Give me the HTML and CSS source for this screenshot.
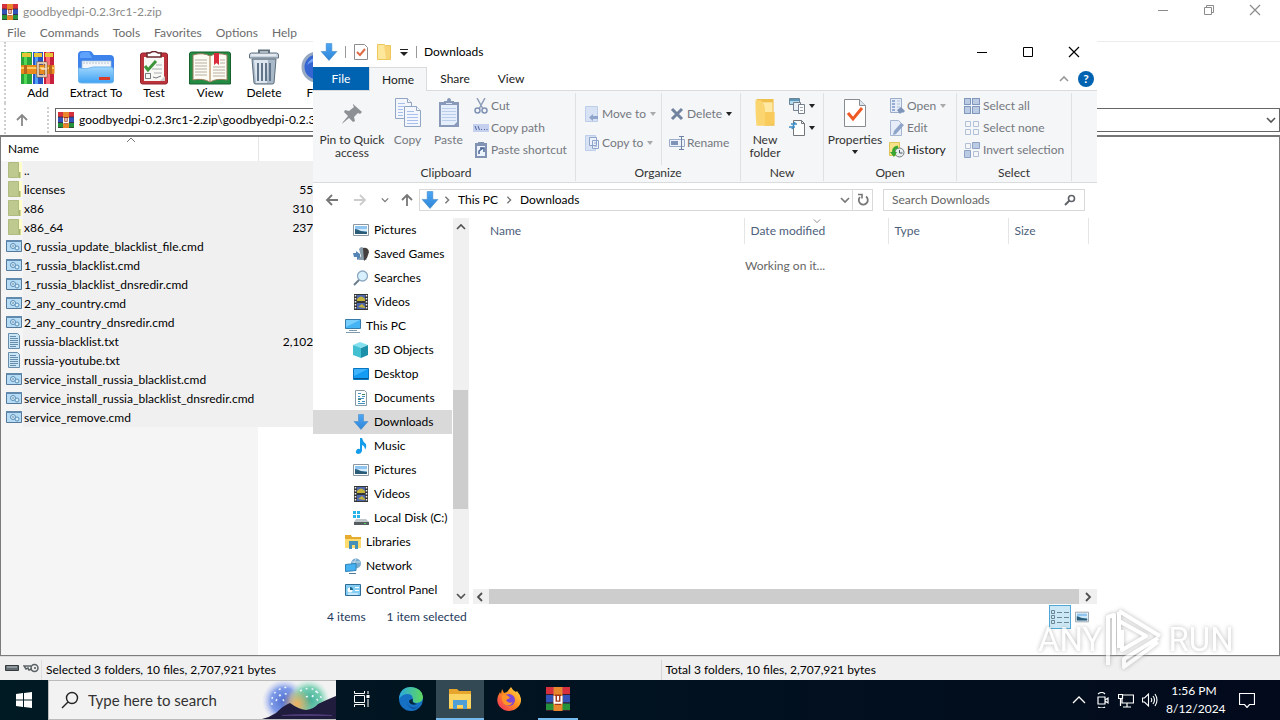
FILE: index.html
```html
<!DOCTYPE html>
<html lang="en">
<head>
<meta charset="utf-8">
<title>goodbyedpi-0.2.3rc1-2.zip</title>
<link rel="stylesheet" href="styles.css">
</head>
<body>
<svg class="sprite" aria-hidden="true">
  <defs>
    <linearGradient id="g-blue" x1="0" y1="0" x2="0" y2="1"><stop offset="0" stop-color="#4ba6f5"/><stop offset="1" stop-color="#2f86d6"/></linearGradient>
    <linearGradient id="g-folder" x1="0" y1="0" x2="0" y2="1"><stop offset="0" stop-color="#9fd6ff"/><stop offset="1" stop-color="#3fa2f2"/></linearGradient>
    <linearGradient id="g-fox" x1="1" y1="0" x2="0" y2="1"><stop offset="0" stop-color="#ffe14a"/><stop offset=".5" stop-color="#ff8a1f"/><stop offset="1" stop-color="#f0246b"/></linearGradient>
    <linearGradient id="g-edge" x1="0" y1="0" x2="1" y2="0"><stop offset="0" stop-color="#2aa8e0"/><stop offset="1" stop-color="#5fd95c"/></linearGradient>
    <radialGradient id="g-sky1"><stop offset="0" stop-color="#4f6fd0"/><stop offset=".6" stop-color="#7f9be8"/><stop offset="1" stop-color="#c5cdf5" stop-opacity="0"/></radialGradient>
    <radialGradient id="g-sky2"><stop offset="0" stop-color="#3fae98"/><stop offset=".6" stop-color="#79cfb2"/><stop offset="1" stop-color="#c5ecdc" stop-opacity="0"/></radialGradient>
    <radialGradient id="g-sky3"><stop offset="0" stop-color="#f0b060"/><stop offset="1" stop-color="#f0b060" stop-opacity="0"/></radialGradient>
  </defs>
  <symbol id="winrar" viewBox="0 0 16 16">
    <path fill="#a92b8f" d="M0 0h16v5H0z"/><path fill="#d6303e" d="M0 0h5v5H0zM11 0h5v5h-5z"/><path fill="#3353b8" d="M0 5h16v6H0z"/><path fill="#25913b" d="M0 11h16v5H0z"/>
    <path stroke="#37202c" stroke-width=".7" d="M0 5h16M0 10.500h16M0 15.700h16" fill="none"/><path fill="#e8872b" d="M5 0h6v16H5z"/><path fill="#a4381c" d="M6 5h4v7H6z"/><path fill="none" stroke="#fff" stroke-width="1.300" d="M5.700 6v4.500h4.600V6M8 6v3"/>
  </symbol>
  <symbol id="books" viewBox="0 0 34 34">
    <path fill="#27a43b" d="M0 1h11v32H0z"/><path fill="#53d854" d="M3 1h3v32H3z"/><path fill="#2454c5" d="M12 1h10v32H12z"/><path fill="#4fa0f5" d="M14 1h3v32h-3z"/><path fill="#c81f3d" d="M23 1h10v32H23z"/><path fill="#fa6b78" d="M25 1h4v32h-4z"/>
    <path fill="#e8c437" d="M1 2h9v4H1zM13 2h8v4h-8zM24 2h8v4h-8z"/><path fill="#e98a1c" d="M0 15q0-1 1-1h31.500q1 0 1 1v7q0 1-1 1H1q-1 0-1-1z"/><path fill="#ffca5e" d="M0 16h33v2H0z"/><path fill="#b8641d" d="M3 14h3v9H3zM28 14h3v9h-3z"/>
    <path fill="none" stroke="#815c42" stroke-width="3" d="M17 12h8v13h-8z"/><path fill="none" stroke="#f7e2cd" stroke-width="1.500" d="M17 12h8v13h-8zM20 18h6"/>
  </symbol>
  <symbol id="extract" viewBox="0 0 38 34">
    <path fill="#3c82ea" d="M1 5q0-4 4-4h7q3 0 4 3l1 1h16q4 0 4 4v15H1z"/><path fill="#5ea2fb" d="M3 4q1-2 4-2h5l3 6H3z"/><path fill="#f3f7fb" stroke="#a6bed6" stroke-width=".7" d="M5 11h29v12H5z"/><path stroke="#b4c1cd" stroke-dasharray="2 1" d="M6 13h27" fill="none"/><path fill="url(#g-folder)" stroke="#6fb5ec" d="M1.500 18q8 2 15-1h17q3 0 3 3v11q0 2-3 2h-29q-3 0-3-2z"/><path fill="#d93b2d" d="M22 27h11v3H22z"/>
  </symbol>
  <symbol id="test" viewBox="0 0 30 34">
    <path fill="#bd333c" stroke="#8f242c" d="M1.500 4q0-2 2-2h23q2 0 2 2v27q0 2-2 2h-23q-2 0-2-2z"/><path fill="#f8f8f4" d="M5 6h20v24H5z"/><path fill="#fff" stroke="#6b2b2e" stroke-width="1.500" d="M8 6V2h3q4-3 8 0h3v4z"/><path fill="none" stroke="#3d953a" stroke-width="3" d="m6 15 3 4 8-9"/><path fill="none" stroke="#a9b0b2" d="M17 14h6M13 18h10M15 22h8"/><path fill="none" stroke="#3d454c" stroke-width=".7" d="M6.500 22.500h5v5h-5zM14 26l3 1 5-2"/><path fill="#cfcfcf" d="M21 30l5-5v5z"/>
  </symbol>
  <symbol id="view" viewBox="0 0 42 34">
    <path fill="#238b43" stroke="#17612d" d="M.500 3q0-2 2-2h37q2 0 2 2v30h-41z"/><path fill="#fcfbf4" stroke="#9c7b5c" d="M4 4q10-3 17 1 7-4 17-1v25q-10-2-17 2-7-4-17-2z"/><path fill="none" stroke="#b7aea0" d="M6 9h12M6 12h12M6 15h12M6 18h12M6 21h12M6 24h12M24 16h12M24 19h12M24 22h12M24 25h12M31 9h5M31 12h5"/><path stroke="#d1b899" stroke-width="2" d="M21 5v25"/><path fill="#da2c3c" d="M25 2h5v12l-2.500-2-2.500 2z"/>
  </symbol>
  <symbol id="trash" viewBox="0 0 32 36">
    <path fill="#a9b9c8" stroke="#5d6c7b" d="M4 10h24l-2 24q0 1-2 1H8q-2 0-2-1z"/><path fill="#dde6ef" d="M6 11h14l-1 23H8z"/><path fill="none" stroke="#61758a" stroke-width="2" d="M10 14v18M14 14v18M18 14v18M22 14v18"/><path fill="#c9d5e1" stroke="#61707e" d="M1.500 9V6q0-2 2-2h25q2 0 2 2v3z"/><path fill="none" stroke="#61707e" stroke-width="2" d="M11 4V1.500h10V4"/><path stroke="#fff" d="M3 6h25"/>
  </symbol>
  <symbol id="find" viewBox="0 0 34 34"><circle cx="16" cy="16" r="14" fill="#3564d3" stroke="#96a8c2" stroke-width="3"/><path fill="#71a3f3" d="M6 14q5-12 19-4-12-2-19 4z"/></symbol>
  <symbol id="rarfolder" viewBox="0 0 16 16"><path fill="#ffffc9" d="M2 0h14v16H2z"/><path fill="#bdc98f" stroke="#91a067" stroke-width=".6" d="M2.500 .500h10v15h-10z"/><path fill="#a7b36e" d="M13 10h1.500v6H13z"/></symbol>
  <symbol id="cmd" viewBox="0 0 16 16"><path fill="#b5dcf4" stroke="#56799a" d="M.500 2.500h15v11H.500z"/><path fill="#628aae" d="M0 2h16v2H0z"/><circle cx="7" cy="8" r="2.500" fill="#d6ecf8" stroke="#5b8eb8"/><circle cx="11" cy="10" r="2" fill="#d6ecf8" stroke="#5b8eb8"/><circle cx="7" cy="8" r=".8" fill="#47739a"/></symbol>
  <symbol id="txt" viewBox="0 0 16 16"><path fill="#cae5f5" stroke="#668eac" d="M2.500 .500h9l2 2v13h-11z"/><path fill="none" stroke="#668eac" d="M4 3.500h6M4 5.500h8M4 7.500h8M4 9.500h8M4 11.500h8M4 13.500h6"/></symbol>
  <symbol id="down" viewBox="0 0 16 16"><path fill="url(#g-blue)" stroke="#3a84c5" stroke-width=".5" d="M5.500 .500h5v7H15L8 15.500 1 7.500h4.500z"/></symbol>
  <symbol id="qprops" viewBox="0 0 14 16"><path fill="#fff" stroke="#8d8d8d" d="M.500 .500h10l3 3v12H.500z"/><path fill="none" stroke="#e06a45" stroke-width="2" d="m3 8 3 3 5-6"/></symbol>
  <symbol id="folder" viewBox="0 0 14 16"><path fill="#f7d576" stroke="#edc65c" d="M.500 .500h7l1 1h5v14H.500z"/><path fill="#fde79d" d="M1 1h6l2 14H1z"/></symbol>
  <symbol id="bigfolder" viewBox="0 0 18 28"><path fill="#f0c04c" d="M1 1h16v20l1 5H8z"/><path fill="#ffe9a3" d="M4 4h12v12H4z"/><path fill="#fbd670" d="M0 2h5q4 4 4 8v16H1q-1-12-1-24z"/><path fill="#f8cb5c" d="M9 13h9v11l-9 2z"/></symbol>
  <symbol id="pin" viewBox="0 0 20 20"><path fill="#8d9196" d="m11 0 9 8-2 2-2-1-4 4 1 4-2 1-4-4-6 5-1 1 1-2 5-6-4-4 1-2 4 1 5-4-1-2z"/></symbol>
  <symbol id="copy" viewBox="0 0 26 30"><g fill="#f3f7fd" stroke="#92a6c4"><path d="M.500 .500h12l4 4v16H.500z"/><path d="M12.500 .500v4h4" /><path d="M9.500 8.500h12l4 4v16h-16z"/><path d="M21.500 8.500v4h4"/></g><path fill="none" stroke="#a7c1ec" d="M3 5.500h7M3 8.500h6M3 11.500h5M3 14.500h5M3 17.500h5M12 13.500h7M12 16.500h11M12 19.500h11M12 22.500h11M12 25.500h11"/></symbol>
  <symbol id="paste" viewBox="0 0 20 30"><path fill="#8999ba" d="M0 4h20v25H0z"/><path fill="#e5eefb" d="M2 7h16v17l-3 3H2z"/><path fill="#8999ba" d="M5 7V3h3q0-3 2-3t2 3h3v4z"/><path fill="#dce6f5" d="M7 5h6v1H7z"/><path fill="none" stroke="#bacdea" d="M3 10.500h14M3 13.500h14M3 16.500h14M3 19.500h14M3 22.500h14"/></symbol>
  <symbol id="cut" viewBox="0 0 16 16"><path fill="none" stroke="#8e9db8" stroke-width="1.500" d="m4 0 6 11M12 0 6 11"/><circle cx="4.500" cy="12.500" r="2.500" fill="none" stroke="#7f92b5" stroke-width="1.500"/><circle cx="11.500" cy="12.500" r="2.500" fill="none" stroke="#7f92b5" stroke-width="1.500"/></symbol>
  <symbol id="path" viewBox="0 0 16 16"><path fill="#c5d0ef" d="M0 4h16v8H0z"/><path fill="none" stroke="#5369a2" d="m2 6 1.500 4M5 6l1.500 4M8 9.500h1M11 9.500h1M13.500 9.500h1"/></symbol>
  <symbol id="shortcut" viewBox="0 0 16 16"><path fill="#8192b3" d="M2 1h12v15H2z"/><path fill="#edf3fc" d="M4 4h8v10H4z"/><path fill="#8192b3" d="M5 0h6v3H5z"/><path fill="none" stroke="#4d6595" stroke-width="1.500" d="M6 12V9l4-3M7 6h4v4"/></symbol>
  <symbol id="moveto" viewBox="0 0 16 16"><path fill="#d8e2f5" stroke="#bdcdea" d="M1.500 .500h12v15h-12z"/><path fill="#8ea4ca" d="M5 11.500 9 8v2h5v3H9v2z"/></symbol>
  <symbol id="copyto" viewBox="0 0 16 16"><path fill="#d8e2f5" stroke="#bdcdea" d="M1.500 .500h10v15h-10z"/><path fill="#edf3fb" stroke="#8ea4ca" d="M5.500 2.500h7v8h-7zM8.500 5.500h6v8h-6z"/><path stroke="#8ea4ca" d="M10 8h3M10 11h3"/></symbol>
  <symbol id="del" viewBox="0 0 16 16"><path fill="none" stroke="#71839f" stroke-width="3" d="m3 3 10 10M13 3 3 13"/></symbol>
  <symbol id="rename" viewBox="0 0 16 16"><path fill="#eef3fb" stroke="#9aabc9" d="M.500 4.500h15v7H.500z"/><path fill="#7f93b8" d="M2 6h7v4H2z"/><path fill="none" stroke="#7183a4" d="M10 1.500h5M12.500 1.500v13M10 14.500h5"/></symbol>
  <symbol id="newitem" viewBox="0 0 16 16"><path fill="#b3dcf1" stroke="#6a8498" d="M.500 .500h10v6H.500z"/><path fill="#5e96b8" d="M1 1h9v2H1z"/><path fill="#e9f1f6" stroke="#74818c" d="M4.500 4.500h7v8h-7z"/><path fill="#fff" stroke="#74818c" d="M9.500 6.500h6v9h-6z"/><path stroke="#9ba5ad" d="M11 9.500h3M11 12.500h3"/></symbol>
  <symbol id="easy" viewBox="0 0 16 16"><path fill="#fff" stroke="#73777b" d="M4.500 .500h8l3 3v12h-11z"/><path fill="none" stroke="#73777b" d="M12.500 .500v3h3"/><path stroke="#3f8fc8" stroke-width="1.500" d="M2 4h6M0 7h6M3 9l3-7"/></symbol>
  <symbol id="props" viewBox="0 0 22 30"><path fill="#fff" stroke="#888c90" d="M.500 1.500h15l6 6v21H.500z"/><path fill="#dbe5ef" stroke="#888c90" d="M15.500 1.500v6h6"/><path fill="none" stroke="#ef5a24" stroke-width="3" d="m4 15 5 6 9-11"/></symbol>
  <symbol id="open" viewBox="0 0 16 16"><path fill="#e6edf9" stroke="#9cadca" d="M1.500 .500h11v14h-11z"/><path stroke="#7b98c8" stroke-width="1.500" d="M3 3h3M3 6h3M3 9h3M3 12h3"/><path stroke="#b0c0d8" d="M8 3h3M8 6h3M8 9h3"/><path fill="#7f94b9" d="m8 12 4-3 4 4-2 2-1-1-2 2z"/></symbol>
  <symbol id="edit" viewBox="0 0 16 16"><path fill="#e6edf9" stroke="#a5b6d1" d="M1.500 .500h8l3 3v12h-11z"/><path fill="#8da3c8" d="m12 3 3 2-8 9-3 1 1-4z"/></symbol>
  <symbol id="history" viewBox="0 0 16 16"><path fill="#f7e28b" stroke="#ddc456" d="M.500 .500h10v13H.500z"/><circle cx="10.500" cy="10.500" r="4.500" fill="#e8edf0" stroke="#737c82"/><path fill="none" stroke="#4c5960" d="M10.500 8v3h3"/><path fill="none" stroke="#37a731" stroke-width="3" d="M9 5q-6 1-4 7"/><path fill="#37a731" d="M1 10h7l-3 5z"/></symbol>
  <symbol id="selall" viewBox="0 0 16 16"><path fill="#bccbe4" stroke="#8096bd" d="M.500 .500h15v15H.500z"/><path stroke="#eef4fc" d="M0 7.500h16M7.500 0v16"/><path fill="none" stroke="#8096bd" d="M.500 .500h6v6h-6zM8.500 .500h7v6h-7zM.500 8.500h6v7h-6zM8.500 8.500h7v7h-7z"/></symbol>
  <symbol id="selnone" viewBox="0 0 16 16"><path fill="none" stroke="#b1c0d7" d="M1.500 1.500h5v5h-5zM9.500 1.500h5v5h-5zM1.500 9.500h5v5h-5zM9.500 9.500h5v5h-5z"/></symbol>
  <symbol id="selinv" viewBox="0 0 16 16"><path fill="#bccbe4" stroke="#8ea2c5" d="M8.500 .500h7v6h-7zM.500 8.500h6v7h-6z"/><path fill="none" stroke="#b1c0d7" d="M1.500 1.500h5v5h-5zM9.500 9.500h5v5h-5z"/></symbol>
  <symbol id="pictures" viewBox="0 0 16 16"><path fill="#fff" stroke="#8b98a3" d="M.500 2.500h15v11H.500z"/><path fill="#8fc5ee" d="M2 4h12v8H2z"/><path fill="#d5ecfa" d="M5 7h9v2H5z"/><path fill="#2b5c78" d="M2 7q4 1 6 2l6 1v2H2z"/></symbol>
  <symbol id="games" viewBox="0 0 16 16"><path fill="#5485b4" d="M0 7h3V5l4 3v4l-3 2v-3H1z"/><path fill="#899cab" d="M6 3q3-4 5 0v8l3 3H5l3-4z"/><path fill="#443f3e" d="M10 2q5-1 6 4l-2 6-3 3z"/></symbol>
  <symbol id="search" viewBox="0 0 16 16"><circle cx="9.500" cy="6" r="5" fill="#d8effd" stroke="#8ca9c1" stroke-width="1.300"/><path stroke="#6b7c8d" stroke-width="2" d="M6 10 1 15"/></symbol>
  <symbol id="videos" viewBox="0 0 16 16"><path fill="#343536" d="M1 0h14v16H1z"/><path fill="#4d67ae" d="M4 1h8v6H4zM4 9h8v6H4z"/><path fill="#c5b43a" d="M4 5q4-5 8 0v2H4zM5 13l4-3 3 3v1z"/><path stroke="#f2f2f2" stroke-width="1.500" stroke-dasharray="1.500 1.500" d="M2.500 1v14M13.500 1v14"/></symbol>
  <symbol id="pc" viewBox="0 0 16 16"><path fill="#45b4f5" stroke="#377ca9" d="M.500 1.500h15v9H.500z"/><path fill="#78cefc" d="M1 2h14L1 9z"/><path stroke="#7e9aad" d="M4 12.500h8M1 14.500h14"/></symbol>
  <symbol id="objects" viewBox="0 0 16 16"><path fill="#83e1ef" d="M0 3 7 0l8 3-8 3z"/><path fill="#43bfd2" d="M0 3l8 3v10l-8-3z"/><path fill="#1c90a8" d="m15 3-7 3v10l7-3z"/></symbol>
  <symbol id="desktop" viewBox="0 0 16 16"><path fill="#149cf4" stroke="#0875c0" d="M.500 2.500h15v11H.500z"/><path fill="#3fb3fb" d="M1 3h14L1 10z"/><path stroke="#07558a" d="M1 12.500h14"/></symbol>
  <symbol id="documents" viewBox="0 0 16 16"><path fill="#fff" stroke="#849aa8" d="M2.500 .500h9l2 2v13h-11z"/><path stroke="#4492c2" d="M5 3.500h3M5 6.500h2M9 6.500h3M5 8.500h6M5 11.500h2M9 11.500h3M5 13.500h7"/><path stroke="#4a7e62" d="M9 4.500h3M5 9.500h3"/></symbol>
  <symbol id="music" viewBox="0 0 16 16"><path fill="#159cea" d="M7 0h2q1 4 4 6 1 3-1 6 0-4-3-5v6q-1 3-4 3-3-1-2-3 1-3 4-2z"/></symbol>
  <symbol id="disk" viewBox="0 0 16 16"><path fill="#28b4e8" d="M0 1h3v3H0zM4 1h3v3H4zM0 5h3v3H0zM4 5h3v3H4z"/><path fill="#c0c6ca" d="M3 9h10l3 3H1z"/><path fill="#555d61" d="M1 12h15v3H1z"/><path fill="#51d45c" d="M11 13h2v1h-2z"/></symbol>
  <symbol id="libraries" viewBox="0 0 16 16"><path fill="#e6ac32" d="M0 1h6l1 2h9v11H0z"/><path fill="#ffdc70" d="M0 5h16v9H0z"/><path fill="#458fb8" d="M4 7h9v8h-3v-4H7v4H4z"/></symbol>
  <symbol id="network" viewBox="0 0 16 16"><circle cx="11" cy="5.500" r="5" fill="#7aaccf"/><path stroke="#c6dfed" fill="none" d="M7 4h8M11 1q-4 5 0 9"/><path fill="#46b2f2" stroke="#2f82b7" d="M.500 6.500 11 5.500v7L.500 13.500z"/><path stroke="#4f7a96" d="M4 15.500h7"/></symbol>
  <symbol id="control" viewBox="0 0 16 16"><path fill="#83cdf4" stroke="#2f6d97" d="M.500 2.500h15v11H.500z"/><circle cx="5" cy="8" r="2.500" fill="#fff"/><path fill="#1d658f" d="M5 8V5q3 0 3 3z"/><path stroke="#fff" d="M10 5.500h4M10 8.500h4M3 12h10"/></symbol>
  <symbol id="details" viewBox="0 0 20 20"><path fill="none" stroke="#6a8796" d="M1.500 3.500h3v3h-3zM1.500 8.500h3v3h-3zM1.500 13.500h3v3h-3zM7 5.500h5M14 5.500h5M7 10.500h5M14 10.500h5M7 15.500h5M14 15.500h5"/></symbol>
  <symbol id="a-left" viewBox="0 0 14 14"><path d="M13 7H2M7 2 2 7l5 5" fill="none" stroke="currentColor" stroke-width="1.800"/></symbol>
  <symbol id="a-right" viewBox="0 0 14 14"><path d="M1 7h11M7 2l5 5-5 5" fill="none" stroke="currentColor" stroke-width="1.800"/></symbol>
  <symbol id="a-up" viewBox="0 0 14 14"><path d="M7 13V2M2 7l5-5 5 5" fill="none" stroke="currentColor" stroke-width="1.800"/></symbol>
  <symbol id="c-up" viewBox="0 0 10 10"><path d="m1 7 4-4 4 4" fill="none" stroke="currentColor" stroke-width="1.600"/></symbol>
  <symbol id="c-thin" viewBox="0 0 10 10"><path d="m1 7 4-4 4 4" fill="none" stroke="currentColor"/></symbol>
  <symbol id="c-down" viewBox="0 0 10 10"><path d="m1 3 4 4 4-4" fill="none" stroke="currentColor" stroke-width="1.600"/></symbol>
  <symbol id="c-sort" viewBox="0 0 10 10"><path d="m1 3 4 4 4-4" fill="none" stroke="currentColor"/></symbol>
  <symbol id="c-left" viewBox="0 0 10 10"><path d="M7 1 3 5l4 4" fill="none" stroke="currentColor" stroke-width="1.800"/></symbol>
  <symbol id="c-right" viewBox="0 0 10 10"><path d="m3 1 4 4-4 4" fill="none" stroke="currentColor" stroke-width="1.800"/></symbol>
  <symbol id="tri" viewBox="0 0 6 6"><path d="M0 1h6L3 5z" fill="currentColor"/></symbol>
  <symbol id="min" viewBox="0 0 12 12"><path d="M1 6.500h10" stroke="currentColor"/></symbol>
  <symbol id="max" viewBox="0 0 12 12"><path d="M1.500 1.500h9v9h-9z" fill="none" stroke="currentColor"/></symbol>
  <symbol id="restore" viewBox="0 0 12 12"><path d="M1.500 3.500h7v7h-7zM3.500 3V1.500h7v7H9" fill="none" stroke="currentColor"/></symbol>
  <symbol id="close" viewBox="0 0 12 12"><path d="m1 1 10 10M11 1 1 11" stroke="currentColor" stroke-width="1.200"/></symbol>
</svg>

<main class="winrar">
  <header class="rar-title">
    <svg class="i16"><use href="#winrar"/></svg><h1>goodbyedpi-0.2.3rc1-2.zip</h1>
    <div class="rar-controls"><button aria-label="Minimize"><svg class="i12"><use href="#min"/></svg></button><button aria-label="Restore"><svg class="i12"><use href="#restore"/></svg></button><button aria-label="Close"><svg class="i12"><use href="#close"/></svg></button></div>
  </header>
  <nav class="rar-menu"><button>File</button><button>Commands</button><button>Tools</button><button>Favorites</button><button>Options</button><button>Help</button></nav>
  <div class="rar-toolbar">
    <button class="wide"><svg class="i34"><use href="#books"/></svg>Add</button>
    <button class="wide"><svg class="i38"><use href="#extract"/></svg>Extract To</button>
    <button class="wide"><svg class="i34"><use href="#test"/></svg>Test</button>
    <button><svg class="i42"><use href="#view"/></svg>View</button>
    <button><svg class="i38"><use href="#trash"/></svg>Delete</button>
    <button><svg class="i34"><use href="#find"/></svg>Find</button>
  </div>
  <div class="rar-address">
    <button class="rar-up" aria-label="Up"><svg class="i14"><use href="#a-up"/></svg></button>
    <div class="rar-path"><svg class="i16"><use href="#winrar"/></svg><input aria-label="Path" value="goodbyedpi-0.2.3rc1-2.zip\goodbyedpi-0.2.3rc1-2"><svg class="i10"><use href="#c-down"/></svg></div>
  </div>
  <section class="rar-list">
    <table>
      <thead><tr><th class="sorted">Name<svg class="i10"><use href="#c-thin"/></svg></th><th class="r-size"></th><th></th></tr></thead>
      <tbody>
        <tr><td><div class="entry"><svg class="i16"><use href="#rarfolder"/></svg>..</div></td><td></td></tr>
        <tr><td><div class="entry"><svg class="i16"><use href="#rarfolder"/></svg>licenses</div></td><td>55,</td></tr>
        <tr><td><div class="entry"><svg class="i16"><use href="#rarfolder"/></svg>x86</div></td><td>310,</td></tr>
        <tr><td><div class="entry"><svg class="i16"><use href="#rarfolder"/></svg>x86_64</div></td><td>237,</td></tr>
        <tr><td><div class="entry"><svg class="i16"><use href="#cmd"/></svg>0_russia_update_blacklist_file.cmd</div></td><td></td></tr>
        <tr><td><div class="entry"><svg class="i16"><use href="#cmd"/></svg>1_russia_blacklist.cmd</div></td><td></td></tr>
        <tr><td><div class="entry"><svg class="i16"><use href="#cmd"/></svg>1_russia_blacklist_dnsredir.cmd</div></td><td></td></tr>
        <tr><td><div class="entry"><svg class="i16"><use href="#cmd"/></svg>2_any_country.cmd</div></td><td></td></tr>
        <tr><td><div class="entry"><svg class="i16"><use href="#cmd"/></svg>2_any_country_dnsredir.cmd</div></td><td></td></tr>
        <tr><td><div class="entry"><svg class="i16"><use href="#txt"/></svg>russia-blacklist.txt</div></td><td>2,102,</td></tr>
        <tr><td><div class="entry"><svg class="i16"><use href="#txt"/></svg>russia-youtube.txt</div></td><td></td></tr>
        <tr><td><div class="entry"><svg class="i16"><use href="#cmd"/></svg>service_install_russia_blacklist.cmd</div></td><td></td></tr>
        <tr><td><div class="entry"><svg class="i16"><use href="#cmd"/></svg>service_install_russia_blacklist_dnsredir.cmd</div></td><td></td></tr>
        <tr><td><div class="entry"><svg class="i16"><use href="#cmd"/></svg>service_remove.cmd</div></td><td></td></tr>
      </tbody>
    </table>
  </section>
  <footer class="rar-status">
    <div class="rar-flags">
      <svg width="16" height="12" viewBox="0 0 16 12"><path fill="#626c70" stroke="#343b3e" d="M1.500 3.500h13v5h-13z"/><path stroke="#b8c3c7" d="M3 5h10"/></svg>
      <svg width="16" height="12" viewBox="0 0 16 12"><circle cx="11.500" cy="6" r="3.500" fill="#eee" stroke="#596165" stroke-width="1.500"/><circle cx="12" cy="6" r="1" fill="#555"/><path fill="none" stroke="#596165" stroke-width="1.500" d="M8 4H1l2 3 2-1 1 2 3-1"/></svg>
    </div>
    <p>Selected 3 folders, 10 files, 2,707,921 bytes</p><p>Total 3 folders, 10 files, 2,707,921 bytes</p>
  </footer>
</main>

<section class="explorer" aria-label="Downloads">
  <header class="ex-title">
    <svg class="i18"><use href="#down"/></svg><i class="bar"></i><svg class="i16"><use href="#qprops"/></svg><svg class="i16"><use href="#folder"/></svg>
    <svg class="i10 dark" viewBox="0 0 10 10"><path fill="currentColor" d="M1 2h8v1H1zM1 5h8L5 9z"/></svg><i class="bar"></i><h2>Downloads</h2>
    <div class="ex-controls"><button aria-label="Minimize"><svg class="i12"><use href="#min"/></svg></button><button aria-label="Maximize"><svg class="i12"><use href="#max"/></svg></button><button aria-label="Close"><svg class="i12"><use href="#close"/></svg></button></div>
  </header>
  <nav class="tabs">
    <button class="file">File</button><button class="on">Home</button><button>Share</button><button>View</button>
    <div class="help"><svg class="i10"><use href="#c-up"/></svg><button aria-label="Help">?</button></div>
  </nav>
  <div class="ribbon">
    <div class="group clipboard">
      <div class="tools">
        <button class="big pinbtn"><svg class="i20"><use href="#pin"/></svg>Pin to Quick<br>access</button>
        <button class="big off"><svg class="i30"><use href="#copy"/></svg>Copy</button>
        <button class="big off"><svg class="i30"><use href="#paste"/></svg>Paste</button>
        <div class="stack off"><button><svg class="i16"><use href="#cut"/></svg>Cut</button><button><svg class="i16"><use href="#path"/></svg>Copy path</button><button><svg class="i16"><use href="#shortcut"/></svg>Paste shortcut</button></div>
      </div><h3>Clipboard</h3>
    </div>
    <div class="group organize">
      <div class="tools">
        <div class="stack two off"><button><svg class="i16"><use href="#moveto"/></svg>Move to<svg class="i6 pale"><use href="#tri"/></svg></button><button><svg class="i16"><use href="#copyto"/></svg>Copy to<svg class="i6 pale"><use href="#tri"/></svg></button></div>
        <div class="stack two off split"><button><svg class="i16"><use href="#del"/></svg>Delete<svg class="i6 dark"><use href="#tri"/></svg></button><button><svg class="i16"><use href="#rename"/></svg>Rename</button></div>
      </div><h3>Organize</h3>
    </div>
    <div class="group new">
      <div class="tools">
        <button class="big"><svg class="i30"><use href="#bigfolder"/></svg>New<br>folder</button>
        <div class="stack tight"><button aria-label="New item"><svg class="i16"><use href="#newitem"/></svg><svg class="i6 dark"><use href="#tri"/></svg></button><button aria-label="Easy access"><svg class="i16"><use href="#easy"/></svg><svg class="i6 dark"><use href="#tri"/></svg></button></div>
      </div><h3>New</h3>
    </div>
    <div class="group opengrp">
      <div class="tools">
        <button class="big"><svg class="i30"><use href="#props"/></svg>Properties<svg class="i6 dark"><use href="#tri"/></svg></button>
        <div class="stack off"><button><svg class="i16"><use href="#open"/></svg>Open<svg class="i6 pale"><use href="#tri"/></svg></button><button><svg class="i16"><use href="#edit"/></svg>Edit</button><button class="dark"><svg class="i16"><use href="#history"/></svg>History</button></div>
      </div><h3>Open</h3>
    </div>
    <div class="group select">
      <div class="tools"><div class="stack off"><button><svg class="i16"><use href="#selall"/></svg>Select all</button><button><svg class="i16"><use href="#selnone"/></svg>Select none</button><button><svg class="i16"><use href="#selinv"/></svg>Invert selection</button></div></div><h3>Select</h3>
    </div>
  </div>
  <div class="ex-nav">
    <div class="arrows"><button aria-label="Back"><svg class="i14"><use href="#a-left"/></svg></button><button aria-label="Forward" class="faint"><svg class="i14"><use href="#a-right"/></svg></button><button aria-label="Recent"><svg class="i8"><use href="#c-down"/></svg></button><button aria-label="Up"><svg class="i14"><use href="#a-up"/></svg></button></div>
    <div class="crumbs"><svg class="i18"><use href="#down"/></svg><svg class="i8"><use href="#c-right"/></svg><a href="#pc">This PC</a><svg class="i8"><use href="#c-right"/></svg><a href="#down">Downloads</a><button class="drop" aria-label="Previous locations"><svg class="i10"><use href="#c-down"/></svg></button><button class="refresh" aria-label="Refresh"><svg class="i14" viewBox="0 0 14 14"><path fill="none" stroke="currentColor" stroke-width="1.800" d="M10 3.500A4.500 4.500 0 1 1 4 4"/><path fill="none" stroke="currentColor" stroke-width="1.600" d="M2 1.500h4v4"/></svg></button></div>
    <div class="find"><input aria-label="Search Downloads" placeholder="Search Downloads"><svg class="i12" viewBox="0 0 12 12"><circle cx="7.500" cy="4.500" r="3" fill="none" stroke="#5f6368" stroke-width="1.600"/><path stroke="#5f6368" stroke-width="2" d="M5.500 6.500 1 11"/></svg></div>
  </div>
  <div class="ex-body">
    <ul class="tree">
      <li><svg class="i16"><use href="#pictures"/></svg>Pictures</li>
      <li><svg class="i16"><use href="#games"/></svg>Saved Games</li>
      <li><svg class="i16"><use href="#search"/></svg>Searches</li>
      <li><svg class="i16"><use href="#videos"/></svg>Videos</li>
      <li class="top"><svg class="i16"><use href="#pc"/></svg>This PC</li>
      <li><svg class="i16"><use href="#objects"/></svg>3D Objects</li>
      <li><svg class="i16"><use href="#desktop"/></svg>Desktop</li>
      <li><svg class="i16"><use href="#documents"/></svg>Documents</li>
      <li class="on"><svg class="i16"><use href="#down"/></svg>Downloads</li>
      <li><svg class="i16"><use href="#music"/></svg>Music</li>
      <li><svg class="i16"><use href="#pictures"/></svg>Pictures</li>
      <li><svg class="i16"><use href="#videos"/></svg>Videos</li>
      <li><svg class="i16"><use href="#disk"/></svg>Local Disk (C:)</li>
      <li class="top"><svg class="i16"><use href="#libraries"/></svg>Libraries</li>
      <li class="top"><svg class="i16"><use href="#network"/></svg>Network</li>
      <li class="top"><svg class="i16"><use href="#control"/></svg>Control Panel</li>
    </ul>
    <div class="vscroll"><svg class="i10"><use href="#c-up"/></svg><div class="track"><i></i></div><svg class="i10"><use href="#c-down"/></svg></div>
    <div class="files">
      <table><thead><tr><th class="c-name">Name</th><th class="c-date">Date modified<svg class="i8"><use href="#c-sort"/></svg></th><th class="c-type">Type</th><th class="c-size">Size</th><th></th></tr></thead></table>
      <p>Working on it...</p>
      <div class="hscroll"><svg class="i10"><use href="#c-left"/></svg><i></i><svg class="i10"><use href="#c-right"/></svg></div>
    </div>
  </div>
  <footer class="ex-status"><span>4 items</span><span>1 item selected</span><div class="modes"><button class="on" aria-label="Details"><svg class="i20"><use href="#details"/></svg></button><button aria-label="Thumbnails"><svg class="i14"><use href="#pictures"/></svg></button></div></footer>
</section>

<div class="watermark"><span>ANY</span>
  <svg width="62" height="66" viewBox="0 0 62 66"><g fill="none" stroke="#fff" stroke-width="4" stroke-linejoin="round"><path d="M4 58V10l6-2v40M15 5v36M15 4 56 29 M15 14 42 29 18 43v-20M54 35 20 60v-8l34-21"/></g></svg>
<span>RUN</span></div>

<footer class="taskbar">
  <button class="start" aria-label="Start"><svg class="i16" viewBox="0 0 16 16"><path fill="#fff" d="M0 2l7-1v6.500H0zM8 1l8-1v7.500H8zM0 8.500h7V15l-7-1zM8 8.500h8V16l-8-1z"/></svg></button>
  <div class="tasksearch">
    <svg class="i18" viewBox="0 0 18 18"><circle cx="11" cy="7" r="5.500" fill="none" stroke="#222" stroke-width="1.400"/><path stroke="#222" stroke-width="1.400" d="m7 11-6 6"/></svg>
    <input aria-label="Search" placeholder="Type here to search">
    <svg class="scene" viewBox="0 0 74 38"><circle cx="22" cy="20" r="22" fill="url(#g-sky1)"/><circle cx="47" cy="19" r="21" fill="url(#g-sky2)"/><circle cx="35" cy="23" r="15" fill="url(#g-sky3)"/><path fill="none" stroke="#e9f4ff" stroke-width="1.500" stroke-dasharray="2 4" d="M10 24q-2-16 16-18M14 20q4-10 14-6M38 10q14-8 22 8M44 16q8-4 12 4M22 20l-6-8M50 16l6-8"/><path fill="#1f1c3d" d="M0 38q8-2 14-6 8-8 14-10 8 6 16 7 8-1 12-6 8-4 18-8v23z"/><path fill="#4e3b76" d="M20 34q24-2 50 0v1H20z"/></svg>
  </div>
  <div class="apps">
    <button aria-label="Task View"><svg class="i16" viewBox="0 0 16 16"><path fill="none" stroke="#fff" d="M.500 4.500h10v7H.500zM.500 0v2.500h10V0M.500 16v-2.500h10V16M14 0v3M14 8v8"/><path fill="#fff" d="M12.500 4h3v3h-3z"/></svg></button>
    <button aria-label="Edge"><svg class="i24" viewBox="0 0 24 24"><circle cx="12" cy="12" r="12" fill="#1671c5"/><path fill="url(#g-edge)" d="M0 12Q1 0 12 0q11 1 12 10 0 5-6 6-5 0-4-3 0-6-5-6-6 0-9 5z"/><path fill="#0c4a95" d="M8 11q-2 9 7 11l7-3Q14 23 9 18q-2-3-1-7z"/><path fill="#06283d" d="M14 12q-2 4 4 5-6 2-8-2 0-3 4-3z"/></svg></button>
    <button class="active" aria-label="File Explorer"><svg class="i24" viewBox="0 0 24 24"><path fill="#e7a52d" d="M1 2h8l2 2h12v18H1z"/><path fill="#fcd462" d="M1 7h22v14H1z"/><path fill="#4d9fd5" d="M5 13h14v9h-4v-4H9v4H5z"/></svg></button>
    <button aria-label="Firefox"><svg class="i24" viewBox="0 0 24 24"><path fill="url(#g-fox)" d="M5 2l2 4 3-1 4-5q2 4 5 5l1-1q7 8 2 15-6 7-15 4Q-2 18 1 9l2-4 1 2z"/><circle cx="12" cy="13" r="6" fill="#7b45d5"/><path fill="#ff9428" d="M5 8q5-1 8 3l-4 2q2 4 7 2-4 6-9 2-3-4-2-9z"/></svg></button>
    <button class="running" aria-label="WinRAR"><svg class="i24"><use href="#winrar"/></svg></button>
  </div>
  <div class="tray">
    <svg class="i14" viewBox="0 0 14 14"><path fill="none" stroke="#fff" stroke-width="1.300" d="m1 10 6-6 6 6"/></svg>
    <svg class="i16" viewBox="0 0 16 16"><path fill="none" stroke="#fff" stroke-width="1.200" d="M4 5h7v7H4zM11 8l3-2v5l-3-2M4 2q4-3 7 0M4 15q4 2 7 0"/></svg>
    <svg class="i16" viewBox="0 0 16 16"><path fill="none" stroke="#fff" stroke-width="1.200" d="M5 3h10.500v8H4V7M9 11v4M5 15h8M.500 2.500h4v4h-4zM2.500 6v8"/></svg>
    <svg class="i16" viewBox="0 0 16 16"><path fill="none" stroke="#fff" stroke-width="1.100" d="M.500 6h2l4-4v12l-4-4h-2zM9 6q1.500 2 0 4M11 4q3 4 0 8M13 2q4 6 0 12"/></svg>
    <time>1:56 PM<br>8/12/2024</time>
    <button aria-label="Notifications"><svg class="i16" viewBox="0 0 16 16"><path fill="none" stroke="#fff" stroke-width="1.200" d="M.500 1.500h15v11h-5l-2.500 3-2.500-3h-5z"/></svg></button>
  </div>
</footer>
</body>
</html>
```
FILE: styles.css
```css
* { box-sizing: border-box; }
body {
  margin: 0;
  min-height: 100vh;
  display: flex;
  flex-direction: column;
  position: relative;
  overflow: hidden;
  font: 12px/16px Lato, "Open Sans", sans-serif;
  color: #000;
  background: #fff;
}
h1, h2, h3, p, ul { margin: 0; padding: 0; font-size: 12px; font-weight: 400; }
ul { list-style: none; }
button, input { font: inherit; color: inherit; border: 0; padding: 0; background: none; }
input { min-width: 0; outline: 0; }
a { color: inherit; text-decoration: none; }
svg { flex: none; display: block; }
table { border-collapse: collapse; }
th { font-weight: 400; text-align: left; }
.sprite { position: absolute; width: 0; height: 0; }
.i6 { width: 6px; height: 6px; }
.i8 { width: 8px; height: 8px; }
.i10 { width: 10px; height: 10px; }
.i12 { width: 12px; height: 12px; }
.i14 { width: 14px; height: 14px; }
.i16 { width: 16px; height: 16px; }
.i18 { width: 18px; height: 18px; }
.i20 { width: 20px; height: 20px; }
.i24 { width: 24px; height: 24px; }
.i30 { width: 30px; height: 30px; }
.i34 { width: 34px; height: 34px; }
.i38 { width: 38px; height: 36px; }
.i42 { width: 42px; height: 34px; }

.winrar { flex: 1; display: flex; flex-direction: column; }
.rar-title { display: flex; align-items: center; gap: 5px; height: 24px; padding-left: 2px; color: #8b8b8b; }
.rar-controls { margin-left: auto; display: flex; padding-right: 2px; }
.rar-controls button { width: 46px; height: 24px; display: grid; place-items: center; padding-bottom: 4px; }
.rar-menu { display: flex; gap: 14px; height: 18px; padding-left: 7px; border-bottom: 1px solid #ececec; color: #6b6b6b; }
.rar-toolbar { display: flex; height: 61px; padding: 6px 0 0 3px; margin-left: 4px; border-left: 2px dotted #cfcfcf; }
.rar-toolbar button { width: 54px; display: flex; flex-direction: column; align-items: center; justify-content: flex-end; white-space: nowrap; padding-bottom: 2px; }
.rar-toolbar .wide { width: 58px; }
.rar-address { display: flex; align-items: center; height: 31px; margin-left: 4px; border-left: 2px dotted #cfcfcf; padding-top: 2px; }
.rar-up { width: 43px; margin-right: 6px; height: 26px; display: grid; place-items: center; color: #888; padding-right: 10px; border-right: 2px dotted #cfcfcf; }
.rar-path { flex: 1; height: 24px; display: flex; align-items: center; gap: 5px; padding: 0 3px 0 2px; border: 1px solid #666; }
.rar-path input { flex: 1; }
.rar-path .i10 { color: #555; }
.rar-list { flex: 1; border: 1px solid #7c7c7c; border-top: 2px solid #767676; margin-top: 1px; background: linear-gradient(to right, #f5f5f5 257px, #fff 257px); }
.rar-list table { width: 100%; table-layout: fixed; }
.rar-list thead { background: #fff; }
.rar-list th { height: 24px; padding: 0 7px; }
.rar-list th:first-child { width: 257px; border-right: 1px solid #e5e5e5; }
.rar-list .r-size { width: 58px; padding: 0; }
.sorted { position: relative; }
.sorted .i10 { position: absolute; left: 125px; top: -2px; color: #777; }
.rar-list tbody tr { background: linear-gradient(to right, transparent 22px, #f0f0f0 22px 320px, #fff 320px); }
.rar-list td { height: 19px; padding: 0; line-height: 19px; }
.rar-list td + td { text-align: right; }
.entry { display: flex; gap: 2px; height: 19px; padding: 1px 0 0 5px; line-height: 18px; white-space: nowrap; }
.rar-status { display: flex; height: 24px; padding-top: 3px; background: #f0f0f0; border-top: 1px solid #ddd; }
.rar-flags { display: flex; gap: 3px; padding: 2px 2px 0 4px; width: 42px; border-right: 1px solid #ddd; }
.rar-status p { flex: 1; line-height: 20px; padding-left: 4px; }
.rar-status p + p { border-left: 1px solid #d5d5d5; }

.explorer { position: absolute; left: 313px; top: 37px; width: 784px; background: #fff; color: #1a1a1a; }
.ex-title { display: flex; align-items: center; height: 30px; padding-left: 7px; gap: 7px; color: #000; }
.ex-title .bar { width: 1px; height: 12px; background: #999; }
.dark { color: #222; }
.pale { color: #aaa; }
.ex-controls { display: flex; margin-left: auto; }
.ex-controls button { width: 46px; height: 30px; display: grid; place-items: center; }
.tabs { display: flex; height: 24px; border-bottom: 1px solid #dadbdc; }
.tabs > button { width: 56px; }
.tabs .file { background: #0063b1; color: #fff; }
.tabs .on { width: 58px; height: 24px; background: #f5f6f7; border: 1px solid #dadbdc; border-bottom: 0; }
.help { display: flex; align-items: center; gap: 9px; margin-left: auto; padding-right: 3px; color: #999; }
.help button { width: 16px; height: 16px; border-radius: 8px; background: #0063b1; color: #fff; font-weight: 700; line-height: 16px; }
.ribbon { display: flex; height: 92px; background: #f5f6f7; border-bottom: 1px solid #dadbdc; color: #333; }
.group { display: flex; flex-direction: column; border-right: 1px solid #e0e1e3; margin: 2px 0 1px; text-align: center; }
.clipboard { width: 263px; padding-left: 4px; }
.organize { width: 165px; }
.new { width: 83px; }
.opengrp { width: 133px; }
.select { width: 115px; }
.tools { display: flex; height: 72px; }
.off { color: #74787f; }
.off .dark, .dark { color: #222; }
.off .pale { color: #aaa; }
.big { width: 41px; padding-top: 5px; display: flex; flex-direction: column; align-items: center; justify-content: flex-start; line-height: 13px; white-space: nowrap; }
.big .i30 { margin-bottom: 5px; }
.big .i20 { margin: 6px 0 9px; }
.pinbtn { width: 70px; }
.big .i6 { margin-top: 3px; }
.stack { display: flex; flex-direction: column; padding: 2px 0 0 4px; }
.stack button { display: flex; align-items: center; gap: 2px; height: 22px; white-space: nowrap; }
.stack .i6 { margin-left: 2px; }
.two { padding: 6px 0 0 8px; width: 85px; }
.two button { height: 29px; }
.split { border-left: 1px solid #e0e1e3; padding-left: 7px; width: 79px; }
.new .big { width: 48px; }
.new .stack { padding-left: 0; }
.opengrp .big { width: 62px; }
.opengrp .stack { padding-left: 3px; }
.select .stack { padding-left: 7px; }
.select button { gap: 3px; }
.ex-nav { display: flex; align-items: center; height: 35px; padding: 0 12px 1px; color: #777; }
.arrows { display: flex; align-items: center; gap: 14px; width: 94px; }
.faint { color: #ccc; }
.arrows button:nth-child(3) { margin-right: -3px; }
.crumbs { flex: 1; display: flex; align-items: center; gap: 7px; height: 22px; border: 1px solid #d9d9d9; padding-left: 1px; }
.crumbs > .i18 { margin-right: -3px; }
.crumbs a { color: #000; }
.crumbs .drop { margin-left: auto; }
.refresh { height: 20px; width: 20px; display: grid; place-items: center; border-left: 1px solid #d9d9d9; margin-left: -5px; }
.find { width: 202px; height: 22px; margin-left: 10px; display: flex; align-items: center; border: 1px solid #d9d9d9; padding: 0 8px; }
.find input { flex: 1; }
input::placeholder { color: #666; opacity: 1; }
.ex-body { display: flex; height: 386px; }
.tree { width: 139px; color: #000; }
.tree li { display: flex; align-items: center; gap: 5px; height: 24px; padding-left: 40px; white-space: nowrap; }
.tree .top { padding-left: 32px; }
.tree .on { background: #d9d9d9; }
.vscroll { width: 16px; margin: 0 4px 0 1px; background: #f0f0f0; display: flex; flex-direction: column; align-items: center; padding: 4px 0 3px; color: #505050; }
.track { flex: 1; align-self: stretch; padding: 158px 1px 0 0; }
.track i { display: block; height: 119px; background: #cdcdcd; }
.files { flex: 1; display: flex; flex-direction: column; }
.files table { table-layout: fixed; width: 100%; color: #4c607a; }
.files th { height: 26px; padding: 0 0 0 6px; border-right: 1px solid #e5e5e5; }
.files th:last-child { border: 0; padding: 0; }
.c-name { width: 271px; }
.files .c-name { padding-left: 17px; }
.c-date { width: 144px; position: relative; }
.c-date svg { position: absolute; left: 68px; top: -1px; color: #777; }
.c-type { width: 120px; }
.c-size { width: 80px; }
.files p { flex: 1; padding-top: 14px; text-align: center; color: #666; }
.hscroll { display: flex; align-items: center; gap: 4px; height: 15px; background: #f0f0f0; padding: 0 4px 0 2px; color: #505050; }
.hscroll i { flex: 1; height: 15px; background: #cdcdcd; }
.ex-status { display: flex; align-items: center; gap: 21px; height: 26px; padding: 0 8px 0 14px; color: #1e395b; }
.modes { display: flex; align-items: center; gap: 4px; margin-left: auto; }
.modes .on { background: #cce8f6; border: 1px solid #4fa8d5; width: 22px; height: 24px; }

.watermark { position: absolute; left: 1038px; top: 607px; display: flex; align-items: center; gap: 2px; font: 33px/66px Roboto, sans-serif; color: #fff; opacity: .7; filter: drop-shadow(0 0 2px #999); }

.taskbar { display: flex; height: 40px; background: linear-gradient(to right, #001a23, #020a1c); color: #fff; }
.start { width: 48px; display: grid; place-items: center; }
.tasksearch { width: 288px; display: flex; align-items: center; gap: 9px; padding-left: 12px; background: #f2f2f2; border: 1px solid #bbb; border-width: 1px 0 1px 1px; overflow: hidden; color: #333; }
.tasksearch input { flex: 1; font-size: 15px; line-height: 20px; }
.tasksearch input::placeholder { color: #333; }
.scene { width: 74px; height: 38px; }
.apps { display: flex; gap: 1px; padding-left: 2px; }
.apps button { width: 48px; display: grid; place-items: center; border-bottom: 2px solid transparent; }
.apps .active { background: #334a54; border-color: #76b9ed; }
.apps .running { background: linear-gradient(#76b9ed, #76b9ed) center bottom / 40px 2px no-repeat border-box; }
.tray { display: flex; align-items: center; gap: 8px; margin-left: auto; padding-right: 25px; }
.tray time { text-align: center; line-height: 18px; width: 56px; margin-right: 9px; }
```
